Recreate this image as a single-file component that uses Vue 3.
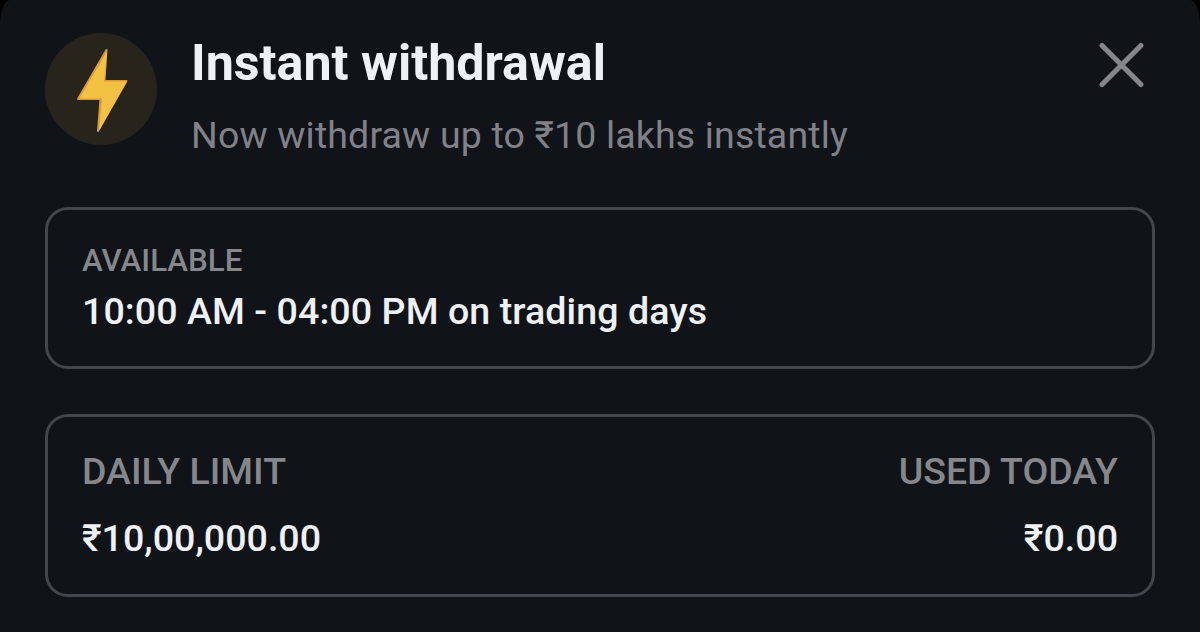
<script setup>
</script>

<template>
  <main class="sheet">
    <header class="head">
      <div class="badge">
        <svg viewBox="0 0 112 112" width="112" height="112">
          <path d="M61.500 17 33 66H55.500L53 98 81.500 48H59.500Z" fill="#dc9838" stroke="#dc9838" stroke-width="2" stroke-linejoin="round" />
          <path d="M61.500 20 35 65H57.500L54.500 96 81 49H58.500Z" fill="#f3c243" stroke="#f3c243" stroke-width="1" stroke-linejoin="round" />
        </svg>
      </div>
      <div class="titles">
        <h1>Instant withdrawal</h1>
        <p>Now withdraw up to ₹10 lakhs instantly</p>
      </div>
      <svg class="close" viewBox="0 0 48 48" width="48" height="48"><path d="M4 4.500 43 43.500M43 4.500 4 43.500" stroke="#85868b" stroke-width="5.2" stroke-linecap="round" /></svg>
    </header>
    <section class="card available">
      <div class="label small">AVAILABLE</div>
      <div class="value hours">10:00 AM - 04:00 PM on trading days</div>
    </section>
    <section class="card limits">
      <div>
        <div class="label">DAILY LIMIT</div>
        <div class="value">₹10,00,000.00</div>
      </div>
      <div class="right">
        <div class="label">USED TODAY</div>
        <div class="value">₹0.00</div>
      </div>
    </section>
  </main>
</template>

<style>
body { margin: 0; background: #000; }
</style>
<style scoped>
.sheet { box-sizing: border-box; width: 1200px; height: 632px; padding: 33px 45px 0; background: #101318; border-radius: 10px 10px 0 0 / 25px 25px 0 0; font-family: Roboto, sans-serif; overflow: hidden; }
.head { display: flex; height: 174px; }
.badge { width: 112px; height: 112px; border-radius: 50%; background: #27241b; }
.badge svg, .close { display: block; }
.titles { margin-left: 34px; flex: 1; white-space: nowrap; }
h1 { margin: 0; font-size: 50.2px; line-height: 60px; font-weight: 700; color: #eef1f6; }
p { margin: 12px 0 0; font-size: 37.5px; line-height: 60px; color: #808287; letter-spacing: .16px; }
.close { margin: 8px 9px 0 0; }
.card { box-sizing: border-box; border: 3px solid #43464c; border-radius: 23px; white-space: nowrap; }
.available { height: 162px; padding: 31px 34px; }
.limits { margin-top: 45px; height: 183px; padding: 32px 34px; display: flex; justify-content: space-between; }
.label { font-size: 37.5px; line-height: 44px; color: #85878b; font-weight: 500; }
.label.small { font-size: 31.3px; line-height: 40px; }
.value { font-size: 37.6px; line-height: 44px; font-weight: 500; color: #eef1f6; margin-top: 23px; }
.small + .value { margin-top: 8px; }
.hours { letter-spacing: .06px; }
.right { text-align: right; }
</style>
